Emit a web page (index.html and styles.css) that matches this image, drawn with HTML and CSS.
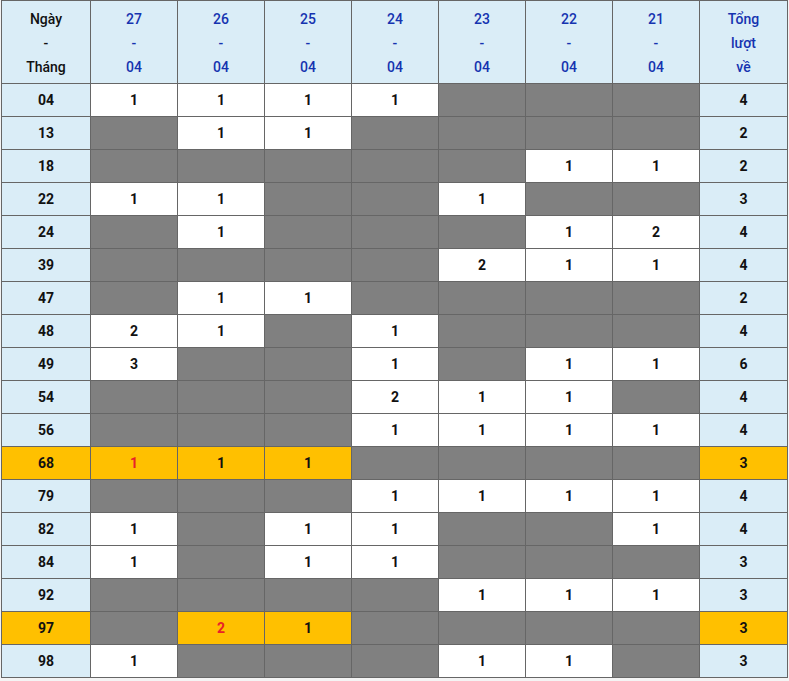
FILE: index.html
```html
<!DOCTYPE html>
<html>
<head>
<meta charset="utf-8">
<link rel="stylesheet" href="styles.css">
</head>
<body>
<table class="stats">
<colgroup>
<col class="c-first"><col class="c-day"><col class="c-day"><col class="c-day"><col class="c-day"><col class="c-day"><col class="c-day"><col class="c-day"><col class="c-last">
</colgroup>
<thead>
<tr>
<th class="lbl">Ngày<br>-<br>Tháng</th>
<th>27<br>-<br>04</th>
<th>26<br>-<br>04</th>
<th>25<br>-<br>04</th>
<th>24<br>-<br>04</th>
<th>23<br>-<br>04</th>
<th>22<br>-<br>04</th>
<th>21<br>-<br>04</th>
<th>Tổng<br>lượt<br>về</th>
</tr>
</thead>
<tbody>
<tr><td class="k">04</td><td>1</td><td>1</td><td>1</td><td>1</td><td class="g"></td><td class="g"></td><td class="g"></td><td class="k">4</td></tr>
<tr><td class="k">13</td><td class="g"></td><td>1</td><td>1</td><td class="g"></td><td class="g"></td><td class="g"></td><td class="g"></td><td class="k">2</td></tr>
<tr><td class="k">18</td><td class="g"></td><td class="g"></td><td class="g"></td><td class="g"></td><td class="g"></td><td>1</td><td>1</td><td class="k">2</td></tr>
<tr><td class="k">22</td><td>1</td><td>1</td><td class="g"></td><td class="g"></td><td>1</td><td class="g"></td><td class="g"></td><td class="k">3</td></tr>
<tr><td class="k">24</td><td class="g"></td><td>1</td><td class="g"></td><td class="g"></td><td class="g"></td><td>1</td><td>2</td><td class="k">4</td></tr>
<tr><td class="k">39</td><td class="g"></td><td class="g"></td><td class="g"></td><td class="g"></td><td>2</td><td>1</td><td>1</td><td class="k">4</td></tr>
<tr><td class="k">47</td><td class="g"></td><td>1</td><td>1</td><td class="g"></td><td class="g"></td><td class="g"></td><td class="g"></td><td class="k">2</td></tr>
<tr><td class="k">48</td><td>2</td><td>1</td><td class="g"></td><td>1</td><td class="g"></td><td class="g"></td><td class="g"></td><td class="k">4</td></tr>
<tr><td class="k">49</td><td>3</td><td class="g"></td><td class="g"></td><td>1</td><td class="g"></td><td>1</td><td>1</td><td class="k">6</td></tr>
<tr><td class="k">54</td><td class="g"></td><td class="g"></td><td class="g"></td><td>2</td><td>1</td><td>1</td><td class="g"></td><td class="k">4</td></tr>
<tr><td class="k">56</td><td class="g"></td><td class="g"></td><td class="g"></td><td>1</td><td>1</td><td>1</td><td>1</td><td class="k">4</td></tr>
<tr class="hot"><td class="k">68</td><td class="red">1</td><td>1</td><td>1</td><td class="g"></td><td class="g"></td><td class="g"></td><td class="g"></td><td class="k">3</td></tr>
<tr><td class="k">79</td><td class="g"></td><td class="g"></td><td class="g"></td><td>1</td><td>1</td><td>1</td><td>1</td><td class="k">4</td></tr>
<tr><td class="k">82</td><td>1</td><td class="g"></td><td>1</td><td>1</td><td class="g"></td><td class="g"></td><td>1</td><td class="k">4</td></tr>
<tr><td class="k">84</td><td>1</td><td class="g"></td><td>1</td><td>1</td><td class="g"></td><td class="g"></td><td class="g"></td><td class="k">3</td></tr>
<tr><td class="k">92</td><td class="g"></td><td class="g"></td><td class="g"></td><td class="g"></td><td>1</td><td>1</td><td>1</td><td class="k">3</td></tr>
<tr class="hot"><td class="k">97</td><td class="g"></td><td class="red">2</td><td>1</td><td class="g"></td><td class="g"></td><td class="g"></td><td class="g"></td><td class="k">3</td></tr>
<tr><td class="k">98</td><td>1</td><td class="g"></td><td class="g"></td><td class="g"></td><td>1</td><td>1</td><td class="g"></td><td class="k">3</td></tr>
</tbody>
</table>
</body>
</html>
```
FILE: styles.css
```css
html, body {
  margin: 0;
  padding: 0;
  background: #f4f4f4;
}
body {
  padding: 0 2px 0 1px;
  font-family: Roboto, "Liberation Sans", Arial, sans-serif;
}
.stats {
  border-collapse: collapse;
  table-layout: fixed;
  width: 786px;
  background: #fff;
}
.c-first { width: 89px; }
.c-day { width: 87px; }
.c-last { width: 88px; }
.stats th,
.stats td {
  border: 1px solid #666;
  text-align: center;
  vertical-align: middle;
  padding: 0;
  font-size: 14px;
}
.stats th {
  background: #daedf7;
  color: #1533b0;
  font-weight: 500;
  line-height: 24px;
  height: 80px;
  padding-top: 2px;
}
.stats th.lbl {
  color: #111;
}
.stats td {
  height: 32px;
  font-weight: 700;
  color: #111;
  background: #fff;
}
.stats td.k {
  background: #daedf7;
}
.stats td.g {
  background: #808080;
}
.stats tr.hot td {
  background: #ffc000;
}
.stats tr.hot td.g {
  background: #808080;
}
.stats td.red {
  color: #e8202a;
}
```
